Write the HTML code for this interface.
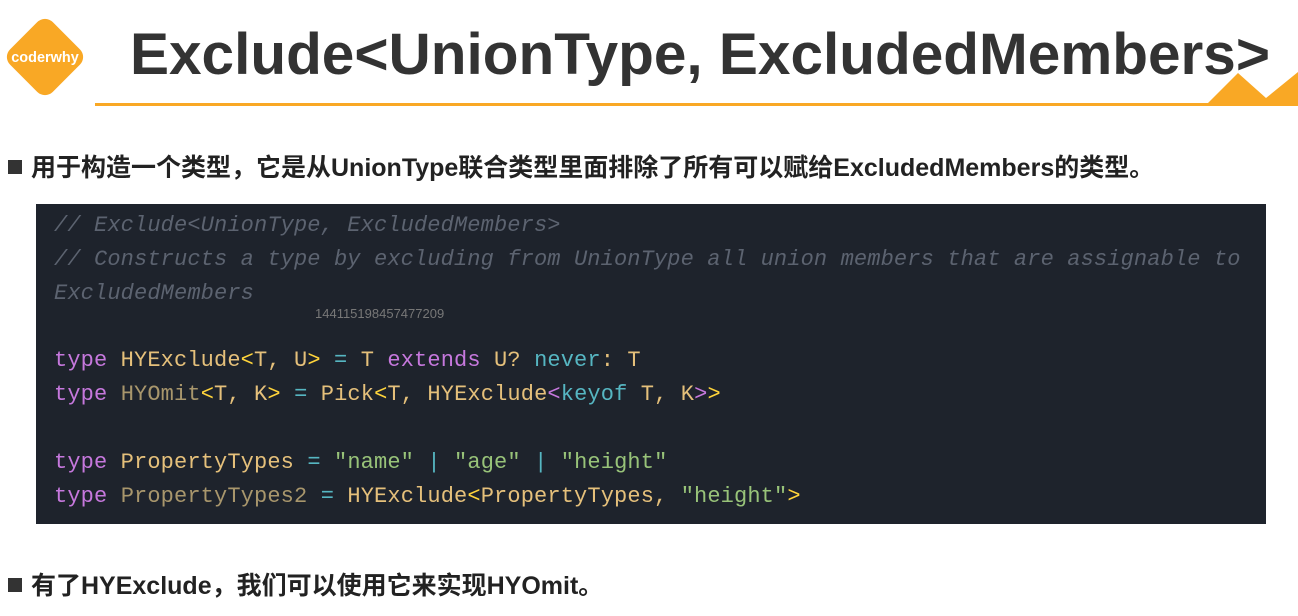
<!DOCTYPE html>
<html><head><meta charset="utf-8"><style>
body{margin:0;width:1298px;height:616px;background:#fff;position:relative;overflow:hidden;font-family:"Liberation Sans","Noto Sans CJK SC",sans-serif}
.logo{position:absolute;left:-2px;top:10px;width:94px;height:94px;}
.title{position:absolute;left:130px;top:19px;font-size:58.5px;font-weight:bold;color:#333;white-space:nowrap;line-height:72px}
.line{position:absolute;left:95px;top:103px;width:1120px;height:3px;background:#f9a825}
.b{position:absolute;left:8px;font-size:25px;font-weight:bold;color:#222;white-space:nowrap;letter-spacing:0px}
.b::before{content:"";display:inline-block;width:14px;height:14px;background:#333;margin-right:9px;vertical-align:2px}
.code{position:absolute;left:36px;top:204px;width:1230px;height:320px;background:#1e232c}
.l{position:absolute;left:18px;font-family:"Liberation Mono",monospace;font-size:22px;letter-spacing:0.13px;white-space:pre;color:#e5c07b}
.c{color:#5c6370;font-style:italic}
.k{color:#c678dd}.y{color:#e5c07b}.d{color:#a8966c}.o{color:#56b6c2}.s{color:#98c379}.g{color:#ffd43b}.w{color:#abb2bf}
</style></head><body>
<svg class="logo" viewBox="0 0 78 78"><rect x="14" y="14" width="50" height="50" rx="9" transform="rotate(45 39 39)" fill="#f9a825"/><text x="39" y="43" text-anchor="middle" font-family="Liberation Sans" font-weight="bold" font-size="12" fill="#fff">coderwhy</text></svg>
<div class="title">Exclude&lt;UnionType, ExcludedMembers&gt;</div>
<div class="line"></div>
<svg style="position:absolute;left:1200px;top:70px" width="98" height="36" viewBox="0 0 98 36"><polygon points="5,36 38,3 66,28 98,2 98,36" fill="#f9a825"/></svg>
<div class="b" style="top:148px">用于构造一个类型，它是从UnionType联合类型里面排除了所有可以赋给ExcludedMembers的类型。</div>
<div class="code">
<div class="l c" style="top:9px">// Exclude&lt;UnionType, ExcludedMembers&gt;</div>
<div class="l c" style="top:43px">// Constructs a type by excluding from UnionType all union members that are assignable to</div>
<div class="l c" style="top:77px">ExcludedMembers</div>
<div style="position:absolute;left:279px;top:102px;font-size:13px;color:#777">144115198457477209</div>
<div class="l" style="top:144px"><span class="k">type</span> HYExclude<span class="g">&lt;</span>T, U<span class="g">&gt;</span> <span class="o">=</span> T <span class="k">extends</span> U? <span class="o">never</span>: T</div>
<div class="l" style="top:178px"><span class="k">type</span> <span class="d">HYOmit</span><span class="g">&lt;</span>T, K<span class="g">&gt;</span> <span class="o">=</span> Pick<span class="g">&lt;</span>T, HYExclude<span class="k">&lt;</span><span class="o">keyof</span> T, K<span class="k">&gt;</span><span class="g">&gt;</span></div>
<div class="l" style="top:246px"><span class="k">type</span> PropertyTypes <span class="o">=</span> <span class="s">"name"</span> <span class="o">|</span> <span class="s">"age"</span> <span class="o">|</span> <span class="s">"height"</span></div>
<div class="l" style="top:280px"><span class="k">type</span> <span class="d">PropertyTypes2</span> <span class="o">=</span> HYExclude<span class="g">&lt;</span>PropertyTypes, <span class="s">"height"</span><span class="g">&gt;</span></div>
</div>
<div class="b" style="top:566px">有了HYExclude，我们可以使用它来实现HYOmit。</div>
</body></html>
